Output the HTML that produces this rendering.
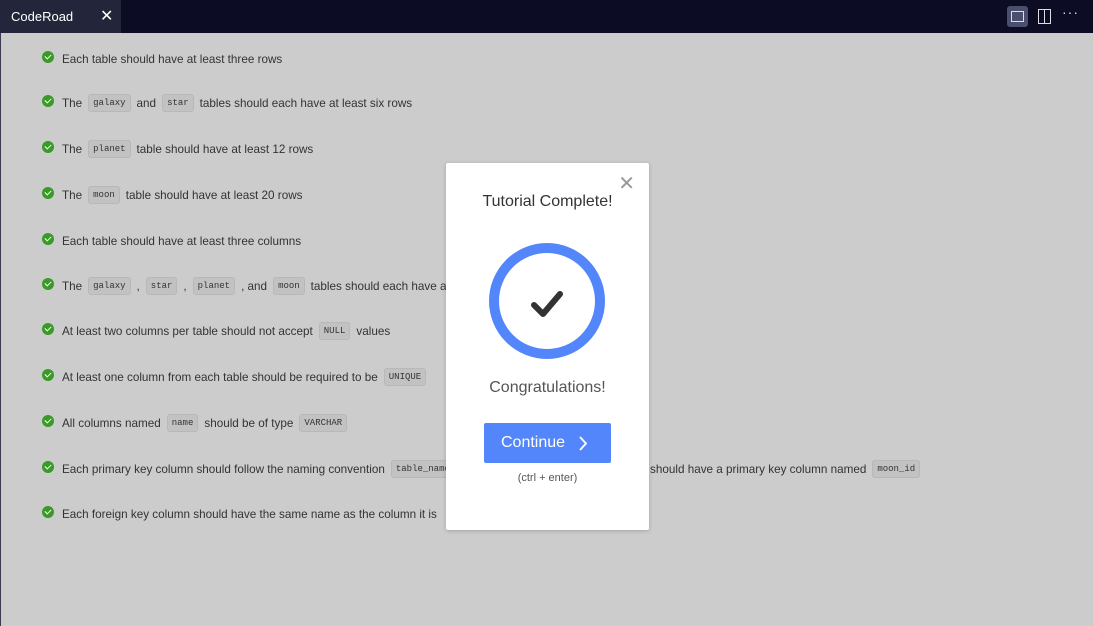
<!DOCTYPE html><html><head><style>
body{margin:0;width:1093px;height:626px;background:#cccccc;font-family:"Liberation Sans",sans-serif;position:relative;overflow:hidden}
.top{position:absolute;left:0;top:0;width:1093px;height:33px;background:#0c0c24}
.tab{position:absolute;left:0;top:0;width:121px;height:33px;background:#23253a;color:#fff;font-size:13px}
.lb{position:absolute;left:0;top:33px;width:1px;height:593px;background:#3a3a50}
.row{position:absolute;left:42px;font-size:11.7px;color:#333;display:flex;align-items:center;height:20px;white-space:nowrap}
.ck{width:12px;height:12px;border-radius:50%;background:#3a9a28;margin-right:8px;position:relative;top:-2px}
.ck:after{content:"";position:absolute;left:3px;top:2.5px;width:5px;height:3px;border-left:1.6px solid #fff;border-bottom:1.6px solid #fff;transform:rotate(-45deg)}
code{font-family:"Liberation Mono",monospace;font-size:9px;background:#c2c2c2;border:1px solid #b8b8b8;border-radius:3px;padding:3px 4px;margin:0 6px}
.modal{position:absolute;left:446px;top:163px;width:203px;height:367px;background:#fff;border-radius:2px;box-shadow:0 1px 4px rgba(0,0,0,.2);text-align:center;color:#333}
</style></head><body>
<div class="top"></div>
<div class="tab"><span style="position:absolute;left:11px;top:9px">CodeRoad</span><span style="position:absolute;left:100px;top:6px;font-size:16px">✕</span></div>
<div style="position:absolute;left:1007px;top:6px;width:21px;height:21px;background:#4a4f6e;border-radius:3px"></div>
<div style="position:absolute;left:1011px;top:11px;width:11px;height:9px;border:1.5px solid #ddd"></div>
<div style="position:absolute;left:1038px;top:9px;width:11px;height:13px;border:1.3px solid #ddd"></div>
<div style="position:absolute;left:1044px;top:9px;width:1.3px;height:15px;background:#ddd"></div>
<div style="position:absolute;left:1062px;top:4px;color:#ddd;font-size:14px;letter-spacing:1px">···</div>
<div class="lb"></div>
<div class="row" style="top:49px"><div class="ck"></div>Each table should have at least three rows</div>
<div class="row" style="top:93px"><div class="ck"></div>The<code>galaxy</code>and<code>star</code>tables should each have at least six rows</div>
<div class="row" style="top:139px"><div class="ck"></div>The<code>planet</code>table should have at least 12 rows</div>
<div class="row" style="top:185px"><div class="ck"></div>The<code>moon</code>table should have at least 20 rows</div>
<div class="row" style="top:231px"><div class="ck"></div>Each table should have at least three columns</div>
<div class="row" style="top:276px"><div class="ck"></div>The<code>galaxy</code>,<code>star</code>,<code>planet</code>, and<code>moon</code>tables should each have at least</div>
<div class="row" style="top:321px"><div class="ck"></div>At least two columns per table should not accept<code>NULL</code>values</div>
<div class="row" style="top:367px"><div class="ck"></div>At least one column from each table should be required to be<code>UNIQUE</code></div>
<div class="row" style="top:413px"><div class="ck"></div>All columns named<code>name</code>should be of type<code>VARCHAR</code></div>
<div class="row" style="top:459px"><div class="ck"></div>Each primary key column should follow the naming convention<code>table_name_id</code></div>
<div class="row" style="top:459px;left:650px">should have a primary key column named<code>moon_id</code></div>
<div class="row" style="top:504px"><div class="ck"></div>Each foreign key column should have the same name as the column it is</div>
<div class="modal">
<div style="position:absolute;right:14px;top:8px;font-size:20px;color:#999;font-weight:300">✕</div>
<div style="position:absolute;left:0;right:0;top:30px;font-size:16px">Tutorial Complete!</div>
<svg style="position:absolute;left:43px;top:80px" width="118" height="118"><circle cx="58" cy="58" r="53" fill="none" stroke="#5386fb" stroke-width="10"/><path d="M45 62 L54 71 L71 51" fill="none" stroke="#333" stroke-width="6" stroke-linecap="round" stroke-linejoin="round"/></svg>
<div style="position:absolute;left:0;right:0;top:216px;font-size:16px;color:#555">Congratulations!</div>
<div style="position:absolute;left:38px;top:260px;width:127px;height:40px;background:#5386fb;border-radius:2px;color:#fff;font-size:16px;line-height:40px"><span style="position:absolute;left:17px">Continue</span><svg style="position:absolute;left:94px;top:13px" width="10" height="15"><path d="M2 1 L8 7.5 L2 14" fill="none" stroke="#fff" stroke-width="1.8"/></svg></div>
<div style="position:absolute;left:0;right:0;top:309px;font-size:11px;color:#555">(ctrl + enter)</div>
</div>
</body></html>
